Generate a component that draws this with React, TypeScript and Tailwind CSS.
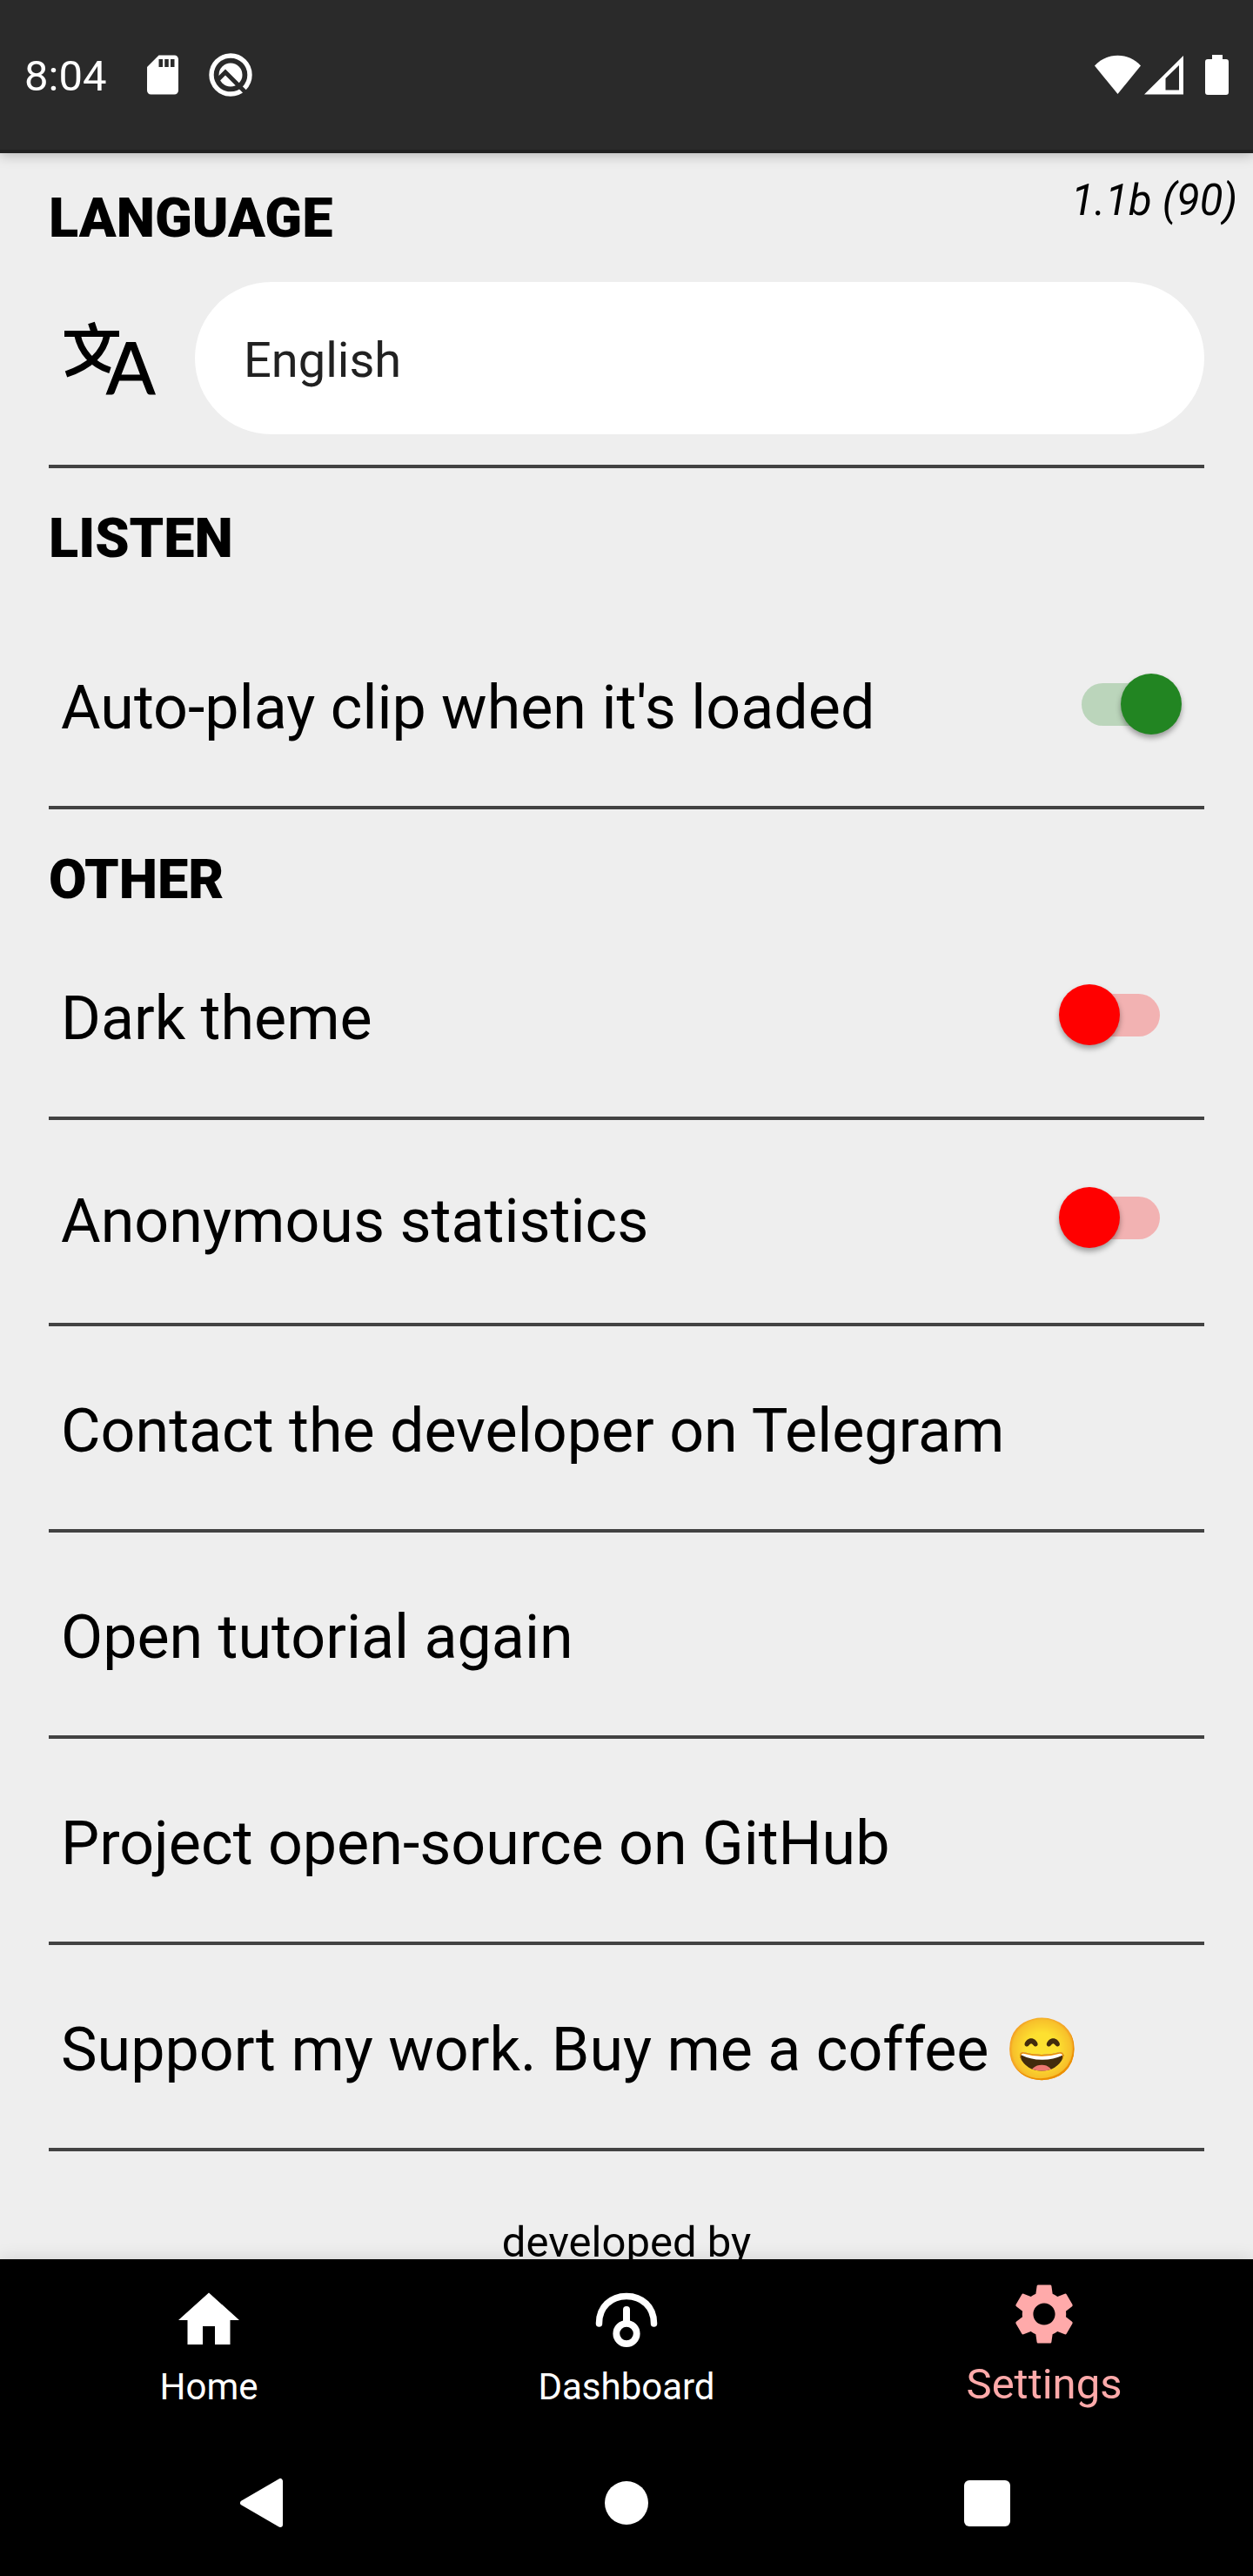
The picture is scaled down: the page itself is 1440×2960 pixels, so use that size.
import { useState } from "react";
import type { ReactNode } from "react";
import { MdHome, MdSdStorage, MdSettings } from "react-icons/md";

function QuickIcon() {
  return (
    <svg viewBox="0 0 50 50" className="size-[50px]" fill="none" aria-hidden="true">
      <circle cx="25" cy="25" r="22" stroke="#fff" strokeWidth="5.4" />
      <circle cx="25" cy="25" r="13.5" fill="#fff" />
      <path d="M10 31L19 22L45 48" stroke="#2a2a2a" strokeWidth="5" />
    </svg>
  );
}

function WifiIcon() {
  return (
    <svg viewBox="0 0 53 46" className="h-[46px] w-[53px]" fill="#fff" aria-hidden="true">
      <path d="M26.500 45L0 12.500C7 5 16 .8 26.500 .8S46 5 53 12.500Z" />
    </svg>
  );
}

function SignalIcon() {
  return (
    <svg viewBox="0 0 45 46" className="h-[46px] w-[45px]" fill="#fff" aria-hidden="true">
      <path fillRule="evenodd" d="M0 45.500L45 1V45.500ZM24.500 27V40.500H40V12Z" />
    </svg>
  );
}

function BatteryIcon() {
  return (
    <svg viewBox="0 0 27 46" className="h-[46px] w-[27px]" fill="#fff" aria-hidden="true">
      <path d="M8 0H20V5H24Q27 5 27 8V43Q27 46 24 46H3Q0 46 0 43V8Q0 5 3 5H8Z" />
    </svg>
  );
}

function TranslateIcon() {
  return (
    <svg viewBox="0 0 112 112" className="size-28 shrink-0" fill="none" stroke="#000" strokeWidth="7.500" aria-hidden="true">
      <path d="M4 27.500H67" strokeWidth="7" />
      <path d="M35 15L39 27" strokeWidth="8" />
      <path d="M19 29C23 48 36 63 56.500 69.500" />
      <path d="M53 29C49 50 33 65 6 74" />
      <path
        d="M51.500 97.500H58.500Q60.500 97.500 61.500 95.500L67 81.500H93.500L99 95.500Q100 97.500 102 97.500H109L86 37H75ZM69.500 74.500L80.500 46L91 74.500Z"
        fill="#000"
        fillRule="evenodd"
        stroke="none"
      />
    </svg>
  );
}

function GaugeIcon() {
  return (
    <svg viewBox="0 0 84 84" className="size-[84px]" fill="none" stroke="currentColor" strokeLinecap="round" aria-hidden="true">
      <path d="M10.500 46V45.500C10.500 27 24 14.500 42 14.500S73.500 27 73.500 45.500V46" strokeWidth="7.500" />
      <circle cx="42" cy="57.500" r="11.700" strokeWidth="7.800" />
      <path d="M42 44V30" strokeWidth="8" />
    </svg>
  );
}

function Divider() {
  return <hr className="mx-14 h-1 border-0 bg-[#424242]" />;
}

function SectionTitle({ children }: { children: ReactNode }) {
  return <h2 className="px-14 pt-11 text-[63px] leading-[74px] font-black">{children}</h2>;
}

function ToggleRow({ label, initial, className }: { label: string; initial: boolean; className: string }) {
  const [on, setOn] = useState(initial);
  return (
    <label className={`flex items-center justify-between pr-[82px] pl-[70px] ${className}`}>
      <span className="text-[70px] leading-[82px]">{label}</span>
      <span className="relative mb-2 flex h-[70px] w-[141px] shrink-0 items-center justify-center">
        <input
          type="checkbox"
          role="switch"
          checked={on}
          onChange={(e) => setOn(e.target.checked)}
          className="peer absolute inset-0 opacity-0"
        />
        <span className="h-[49px] w-[90px] rounded-full bg-[#ff0000]/25 peer-checked:bg-[#228b22]/25" />
        <span className="absolute top-0 left-0 size-[70px] rounded-full bg-[#ff0000] shadow-[0_4px_6px_rgba(0,0,0,0.35)] peer-checked:right-0 peer-checked:left-auto peer-checked:bg-[#228522]" />
      </span>
    </label>
  );
}

function LinkRow({ children }: { children: ReactNode }) {
  return (
    <a href="#" className="block px-[70px] pt-[79px] pb-[72px] text-[70px] leading-[82px]">
      {children}
    </a>
  );
}

export default function App() {
  return (
    <div className="flex h-screen flex-col bg-[#eeeeee] font-['Roboto',sans-serif] text-black">
      <header className="relative z-10 flex shrink-0 items-center justify-between border-b-4 border-[#212121] bg-[#2a2a2a] px-7 py-[57px] shadow-[0_2px_14px_rgba(0,0,0,0.25)]">
        <div className="flex items-center text-white">
          <span className="pt-1 text-[49px] leading-[54px]">8:04</span>
          <MdSdStorage className="ml-[38px] size-[54px]" aria-hidden="true" />
          <span className="ml-[26px]">
            <QuickIcon />
          </span>
        </div>
        <div className="flex items-center">
          <WifiIcon />
          <span className="ml-1">
            <SignalIcon />
          </span>
          <span className="ml-[25px]">
            <BatteryIcon />
          </span>
        </div>
      </header>

      <main className="min-h-0 flex-1 overflow-y-auto [scrollbar-width:none]">
        <div className="flex items-start justify-between pt-[26px] pr-[18px] pl-14">
          <h2 className="mt-3 text-[63px] leading-[74px] font-black">
            <label htmlFor="language">LANGUAGE</label>
          </h2>
          <span className="text-[49px] leading-[58px] italic">1.1b (90)</span>
        </div>
        <div className="flex items-center gap-[42px] pt-9 pr-14 pb-[35px] pl-[70px]">
          <TranslateIcon />
          <select
            id="language"
            className="h-[175px] min-w-0 flex-1 appearance-none rounded-full bg-white px-14 pt-1 text-[56px] text-[#212121]"
          >
            <option>English</option>
          </select>
        </div>
        <Divider />

        <SectionTitle>LISTEN</SectionTitle>
        <ToggleRow label="Auto-play clip when it's loaded" initial={true} className="pt-[116px] pb-[72px]" />
        <Divider />

        <SectionTitle>OTHER</SectionTitle>
        <ToggleRow label="Dark theme" initial={false} className="pt-[81px] pb-[72px]" />
        <Divider />
        <ToggleRow label="Anonymous statistics" initial={false} className="pt-[75px] pb-[76px]" />
        <Divider />
        <LinkRow>Contact the developer on Telegram</LinkRow>
        <Divider />
        <LinkRow>Open tutorial again</LinkRow>
        <Divider />
        <LinkRow>Project open-source on GitHub</LinkRow>
        <Divider />
        <LinkRow>Support my work. Buy me a coffee 😄</LinkRow>
        <Divider />
        <p className="pt-[76px] text-center text-[49px] leading-[58px]">developed by</p>
      </main>

      <footer className="relative z-10 shrink-0 bg-black text-white shadow-[0_0_20px_rgba(0,0,0,0.12)]">
        <nav className="grid h-[196px] grid-cols-3">
          <a href="#" className="flex flex-col items-center pt-7">
            <MdHome className="size-[84px]" aria-hidden="true" />
            <span className="mt-[10px] text-[42px] leading-[50px]">Home</span>
          </a>
          <a href="#" className="flex flex-col items-center pt-7">
            <GaugeIcon />
            <span className="mt-[10px] text-[42px] leading-[50px]">Dashboard</span>
          </a>
          <a href="#" aria-current="page" className="flex flex-col items-center pt-[21px] text-[#ffaaaa]">
            <MdSettings className="size-[84px]" aria-hidden="true" />
            <span className="mt-[10px] text-[49px] leading-[58px]">Settings</span>
          </a>
        </nav>
        <div className="grid h-[168px] grid-cols-3 items-center justify-items-center px-[98px]">
          <button aria-label="Back">
            <svg viewBox="0 0 84 84" className="size-[84px]" fill="#fff" stroke="#fff" strokeWidth="6" strokeLinejoin="round" aria-hidden="true">
              <path d="M16 42L59 17V67Z" />
            </svg>
          </button>
          <button aria-label="Home screen" className="size-[50px] rounded-full bg-white" />
          <button aria-label="Recent apps" className="size-[53px] rounded-md bg-white" />
        </div>
      </footer>
    </div>
  );
}
